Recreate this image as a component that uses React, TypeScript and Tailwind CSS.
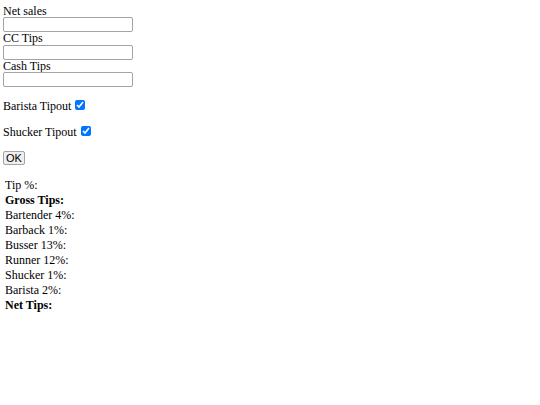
const rows: { label: string; bold?: boolean }[] = [
  { label: "Tip %:" },
  { label: "Gross Tips:", bold: true },
  { label: "Bartender 4%:" },
  { label: "Barback 1%:" },
  { label: "Busser 13%:" },
  { label: "Runner 12%:" },
  { label: "Shucker 1%:" },
  { label: "Barista 2%:" },
  { label: "Net Tips:", bold: true },
];

function Field({ label }: { label: string }) {
  return (
    <div className="flex flex-col items-start">
      <label className="leading-[12.5px] h-[12.5px]">{label}</label>
      <input
        type="text"
        className="w-[130px] h-[15px] border border-[#a3a3a3] rounded-[2px] bg-white"
      />
    </div>
  );
}

export default function App() {
  return (
    <div
      className="bg-white min-h-[405px] px-[3px] pt-[4.5px] text-[12px] text-black"
      style={{ fontFamily: '"Liberation Serif", serif' }}
    >
      <form className="flex flex-col items-start">
        <Field label="Net sales" />
        <Field label="CC Tips" />
        <Field label="Cash Tips" />
        <p className="mt-[12px] flex items-center leading-[14px] h-[14px]">
          Barista Tipout
          <input
            type="checkbox"
            defaultChecked
            className="w-[10px] h-[10px] ml-[4px] -mt-[2px] accent-[#0075ff]"
          />
        </p>
        <p className="mt-[12px] flex items-center leading-[14px] h-[14px]">
          Shucker Tipout
          <input
            type="checkbox"
            defaultChecked
            className="w-[10px] h-[10px] ml-[4px] -mt-[2px] accent-[#0075ff]"
          />
        </p>
        <button
          type="button"
          className="mt-[12px] h-[14px] w-[22px] border border-[#a3a3a3] rounded-[2px] bg-[#efefef] text-[11px] leading-[12px]"
          style={{ fontFamily: '"Liberation Sans", Arial, sans-serif' }}
        >
          OK
        </button>
      </form>
      <div className="mt-[13px] flex flex-col pl-[2px]">
        {rows.map((row, idx) => (
          <div
            key={idx}
            className={
              row.bold
                ? "h-[15px] leading-[15px] font-bold"
                : "h-[15px] leading-[15px]"
            }
          >
            {row.label}
          </div>
        ))}
      </div>
    </div>
  );
}
